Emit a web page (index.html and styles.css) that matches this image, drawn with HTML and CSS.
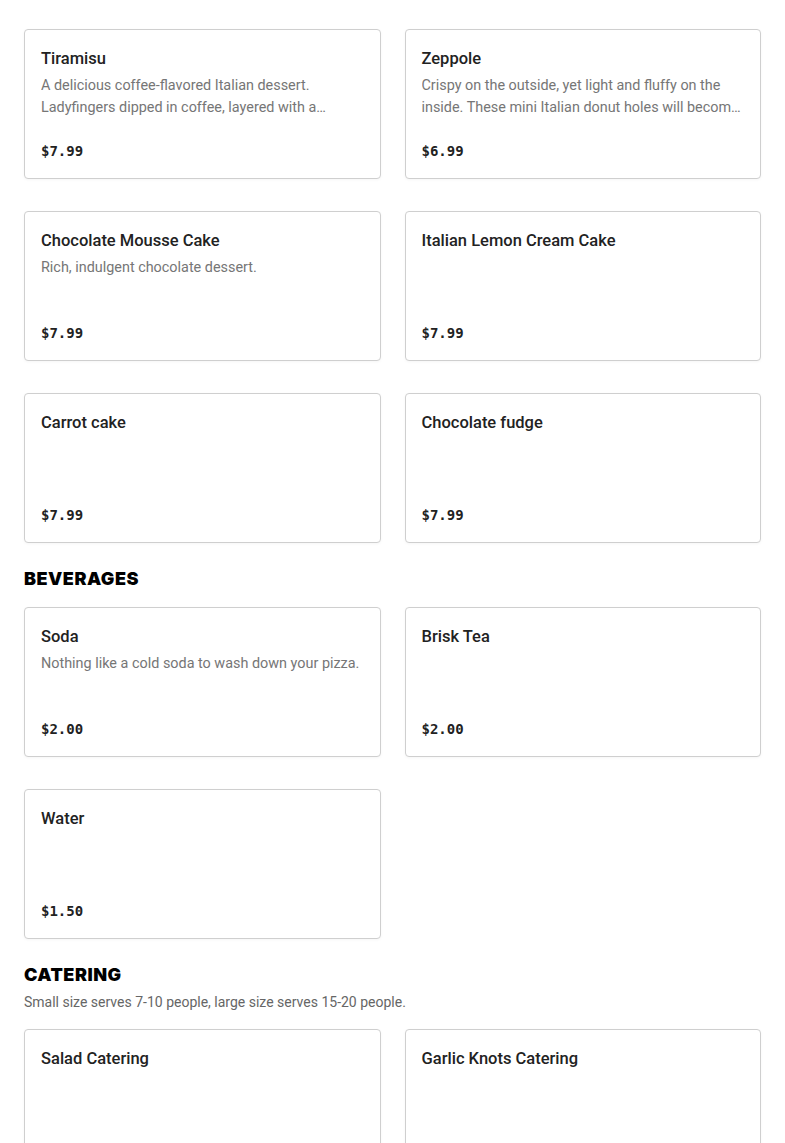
FILE: index.html
```html
<!DOCTYPE html>
<html lang="en">
<head>
<meta charset="utf-8">
<title>Menu</title>
<link rel="stylesheet" href="styles.css">
</head>
<body>
<main class="menu">
  <section class="section">
    <div class="grid grid-first">
      <article class="card"><h3 class="card-title">Cannoli</h3><p class="card-desc"></p><div class="card-price">$5.99</div></article>
      <article class="card"><h3 class="card-title">Cheesecake</h3><p class="card-desc"></p><div class="card-price">$7.99</div></article>
      <article class="card"><h3 class="card-title">Tiramisu</h3><p class="card-desc">A delicious coffee-flavored Italian dessert. Ladyfingers dipped in coffee, layered with a whipped mixture of eggs, sugar and mascarpone cheese.</p><div class="card-price">$7.99</div></article>
      <article class="card"><h3 class="card-title">Zeppole</h3><p class="card-desc">Crispy on the outside, yet light and fluffy on the inside. These mini Italian donut holes will become your new favorite treat.</p><div class="card-price">$6.99</div></article>
      <article class="card"><h3 class="card-title">Chocolate Mousse Cake</h3><p class="card-desc">Rich, indulgent chocolate dessert.</p><div class="card-price">$7.99</div></article>
      <article class="card"><h3 class="card-title">Italian Lemon Cream Cake</h3><p class="card-desc"></p><div class="card-price">$7.99</div></article>
      <article class="card"><h3 class="card-title">Carrot cake</h3><p class="card-desc"></p><div class="card-price">$7.99</div></article>
      <article class="card"><h3 class="card-title">Chocolate fudge</h3><p class="card-desc"></p><div class="card-price">$7.99</div></article>
    </div>
  </section>

  <section class="section">
    <h2 class="section-title">BEVERAGES</h2>
    <div class="grid">
      <article class="card"><h3 class="card-title">Soda</h3><p class="card-desc">Nothing like a cold soda to wash down your pizza.</p><div class="card-price">$2.00</div></article>
      <article class="card"><h3 class="card-title">Brisk Tea</h3><p class="card-desc"></p><div class="card-price">$2.00</div></article>
      <article class="card"><h3 class="card-title">Water</h3><p class="card-desc"></p><div class="card-price">$1.50</div></article>
    </div>
  </section>

  <section class="section">
    <h2 class="section-title">CATERING</h2>
    <p class="section-note">Small size serves 7-10 people, large size serves 15-20 people.</p>
    <div class="grid">
      <article class="card"><h3 class="card-title">Salad Catering</h3><p class="card-desc"></p><div class="card-price card-price-faint">$39.99</div></article>
      <article class="card"><h3 class="card-title">Garlic Knots Catering</h3><p class="card-desc"></p><div class="card-price card-price-faint">$24.99</div></article>
    </div>
  </section>
</main>
</body>
</html>
```

FILE: styles.css
```css
* { box-sizing: border-box; }

html, body {
  margin: 0;
  padding: 0;
  background: #fff;
}

body {
  font-family: "Roboto", "Liberation Sans", sans-serif;
  color: #222;
}

.menu {
  padding: 0 24px;
  margin-top: -153px;
}

.section {
  margin-bottom: 24px;
}

.section-title {
  margin: 0;
  font-family: "Inter", "Liberation Sans", sans-serif;
  font-weight: 900;
  font-size: 18px;
  line-height: 24px;
  letter-spacing: 0.5px;
  color: #000;
}

.section-note {
  margin: 4px 0 0;
  font-size: 14px;
  line-height: 22px;
  color: #666;
}

.grid {
  margin-top: 16px;
  display: grid;
  grid-template-columns: 1fr 1fr;
  column-gap: 24px;
  row-gap: 32px;
}

.grid-first {
  margin-top: 0;
}

.card {
  height: 150px;
  border: 1px solid #cfcfcf;
  border-radius: 4px;
  padding: 16px;
  display: flex;
  flex-direction: column;
  background: #fff;
  box-shadow: 0 1px 3px rgba(0, 0, 0, 0.04);
}

.card-title {
  margin: 1px 0 4px;
  font-size: 16.5px;
  font-weight: 500;
  line-height: 24px;
  color: #222;
}

.card-desc {
  margin: 0;
  font-size: 14.4px;
  line-height: 22px;
  color: #767676;
  display: -webkit-box;
  -webkit-line-clamp: 2;
  -webkit-box-orient: vertical;
  overflow: hidden;
}

.card-price {
  margin-top: auto;
  font-family: "DejaVu Sans Mono", "Liberation Mono", monospace;
  font-weight: 700;
  font-size: 14px;
  line-height: 22px;
  color: #222;
}

.card-price-faint {
  color: #eeeeee;
}
```
